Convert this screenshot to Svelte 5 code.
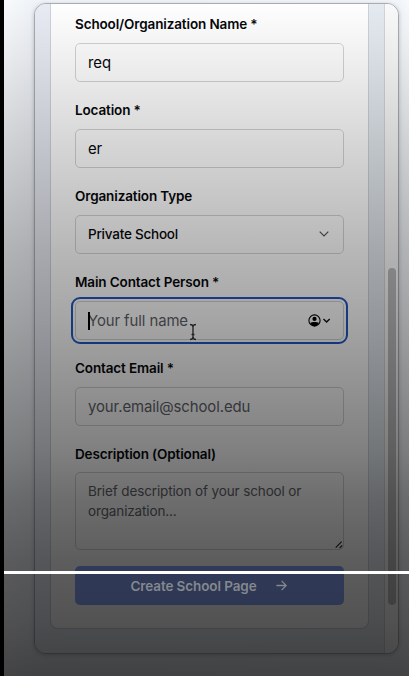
<script>
  const fields = [
    { label: 'School/Organization Name *', value: 'req', kind: 'text' },
    { label: 'Location *', value: 'er', kind: 'text' },
    { label: 'Organization Type', value: 'Private School', kind: 'select' },
    { label: 'Main Contact Person *', hint: 'Your full name', kind: 'focus' },
    { label: 'Contact Email *', hint: 'your.email@school.edu', kind: 'text' }
  ];
</script>

<div class="page">
  <div class="modal">
    <div class="content">
      <div class="card">
        {#each fields as f}
          <div class="field">
            <div class="label">{f.label}</div>
            <div class="input {f.kind}">
              {#if f.kind === 'focus'}<i class="caret"></i>{/if}
              <span class:hint={f.hint}>{f.value ?? f.hint}</span>
              {#if f.kind === 'select'}
                <svg class="end chev" width="10" height="6" viewBox="0 0 10 6"><path d="M.7.7 5 5 9.3.7" /></svg>
              {/if}
              {#if f.kind === 'focus'}
                <svg class="end" width="23" height="13" viewBox="0 0 23 13">
                  <circle cx="6.5" cy="6.5" r="5.6" fill="none" stroke="#000" stroke-width="1.1" />
                  <circle cx="6.5" cy="4.9" r="2.1" fill="#000" />
                  <path d="M2.2 8.9C4 7.6 9 7.6 10.8 8.9 9.8 11.2 8 12 6.5 12S3.2 11.2 2.2 8.9Z" fill="#000" />
                  <path d="M15.5 4.9 18.6 8.1 21.7 4.9" fill="none" stroke="#111" stroke-width="1.4" />
                </svg>
              {/if}
            </div>
          </div>
        {/each}
        <div class="label">Description (Optional)</div>
        <div class="area">
          Brief description of your school or organization...
          <svg class="grip" width="8" height="8" viewBox="0 0 8 8"><path d="M.7 6.6 6.6.7M4.5 7.2 7.2 4.5" /></svg>
        </div>
        <div class="button">
          <span>Create School Page</span>
          <svg width="11" height="11" viewBox="0 0 11 11"><path d="M.4 5.5H10M5.6.9 10.2 5.5 5.6 10.1" /></svg>
        </div>
      </div>
    </div>
    <div class="track"><div class="thumb"></div></div>
  </div>
  <div class="shade"></div>
  <svg class="ibeam" width="8" height="18" viewBox="0 0 8 18">
    <path class="halo" d="M1 1.5Q4 1.5 4 4Q4 1.5 7 1.5M4 4V14M1 16.5Q4 16.5 4 14Q4 16.5 7 16.5M2.5 11.5H5.5" />
    <path d="M1 1.5Q4 1.5 4 4Q4 1.5 7 1.5M4 4V14M1 16.5Q4 16.5 4 14Q4 16.5 7 16.5M2.5 11.5H5.5" />
  </svg>
  <div class="line"></div>
</div>

<style>
  .page {
    position: relative;
    width: 409px;
    height: 676px;
    box-sizing: border-box;
    overflow: hidden;
    border-left: 4px solid #000;
    padding: 3px 10px 22px 30px;
    background: linear-gradient(90deg, #f8fafd, #eff2f7 30px, #f1f5f9 395px, #f8fafd);
    font-family: Inter, "Liberation Sans", sans-serif;
    color: #05070a;
  }
  .modal {
    display: flex;
    box-sizing: border-box;
    width: 365px;
    height: 651px;
    border: 1px solid #a9adb2;
    border-radius: 12px;
    overflow: hidden;
    background: #e6ebf4;
    box-shadow: 0 1px 4px #0003;
  }
  .content {
    flex: 1;
    padding: 0 15px 25px;
    background: linear-gradient(90deg, #e9ecf4, #e5ebf1);
  }
  .card {
    box-sizing: border-box;
    height: 625px;
    padding: 10px 24px 0;
    background: #fff;
    border: 1px solid #cbd3dc;
    border-top: 0;
    border-radius: 0 0 8px 8px;
  }
  .field { height: 86px; }
  .label {
    height: 20px;
    line-height: 20px;
    margin-bottom: 9px;
    font-size: 13.5px;
    letter-spacing: -.13px;
    font-weight: 600;
    white-space: nowrap;
  }
  .input {
    position: relative;
    display: flex;
    align-items: center;
    box-sizing: border-box;
    height: 39px;
    padding: 0 12px;
    border: 1px solid #d2d4d7;
    border-radius: 5px;
    font-size: 14.9px;
    letter-spacing: -.08px;
    white-space: nowrap;
  }
  .select { padding-bottom: 1px; font-size: 13.5px; letter-spacing: -.23px; font-weight: 500; }
  .focus { outline: 2px solid #2159c6; outline-offset: 2px; }
  .hint { color: #5f636a; }
  .caret { position: absolute; left: 12px; top: 10px; width: 1.5px; height: 18px; background: #000; }
  .end { margin-left: auto; }
  .chev { margin-right: 2px; fill: none; stroke: #555; stroke-width: 1.2; }
  .area {
    position: relative;
    box-sizing: border-box;
    height: 78px;
    margin-top: -1px;
    padding: 9px 12px 7px;
    border: 1px solid #d2d4d7;
    border-radius: 5px;
    color: #5f636a;
    font-size: 13.5px;
    letter-spacing: -.13px;
    line-height: 19.5px;
  }
  .grip { position: absolute; right: 0; bottom: 0; fill: none; stroke: #222; stroke-width: 1.1; }
  .button {
    display: flex;
    align-items: center;
    justify-content: center;
    gap: 19px;
    height: 39px;
    padding-right: 2px;
    margin-top: 16px;
    border-radius: 5px;
    background: #87a2f4;
    color: #84888f;
    font-size: 13.5px;
    letter-spacing: -.1px;
    font-weight: 600;
    white-space: nowrap;
  }
  .button span, .button svg { position: relative; z-index: 2; }
  .button svg { fill: none; stroke: #84888f; stroke-width: 1.3; }
  .track {
    box-sizing: border-box;
    width: 14px;
    padding: 264px 2px 0 3px;
    background: #fafafa;
    border-left: 1px solid #d5d5d5;
  }
  .thumb { width: 8px; height: 337px; border-radius: 4px; background: #bcbdbd; }
  .shade {
    position: absolute;
    z-index: 1;
    inset: 0;
    background: linear-gradient(180deg, #0000 0, #00000010 60px, #0000002b 150px, #00000048 250px, #0000005a 320px, #00000071 400px, #0000007f 450px, #00000092 500px, #000000a2 560px, #000000ac 620px, #000000ba 676px);
  }
  .ibeam { position: absolute; z-index: 2; left: 185px; top: 323px; fill: none; stroke: #222; stroke-width: 1.4; }
  .halo { stroke: #bbb; stroke-width: 2.4; stroke-opacity: .6; }
  .line { position: absolute; z-index: 3; left: -4px; right: 0; top: 571px; height: 3px; background: #fff; }
</style>
